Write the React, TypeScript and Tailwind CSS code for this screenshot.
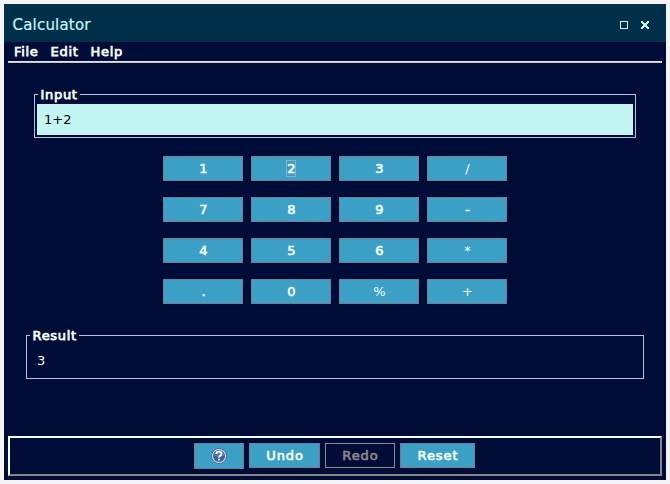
import type { ReactNode } from "react";

const keys = [
  ["1", "2", "3", "/"],
  ["7", "8", "9", "-"],
  ["4", "5", "6", "*"],
  [".", "0", "%", "+"],
];

const light = ["/", "*", "%", "+"];

function Group({ title, className, children }: { title: string; className: string; children: ReactNode }) {
  return (
    <fieldset className={`h-[52px] border border-[#b0c4de] ${className}`}>
      <legend className="ml-[3px] h-[17px] pl-[2.5px] pr-0.5 leading-[17px] tracking-[0.7px] text-[#f5fffa] [-webkit-text-stroke:0.75px_#f5fffa]">{title}</legend>
      {children}
    </fieldset>
  );
}

function Key({ label }: { label: string }) {
  return (
    <button
      className={`flex h-[25px] w-20 items-center justify-center border border-[#708090] bg-[#3b9fc6] text-[#f5fffa] ${
        light.includes(label) ? "" : "[-webkit-text-stroke:0.6px_#f5fffa]"
      }`}
    >
      <span
        className={
          label === "2"
            ? "flex h-[17px] w-[10px] items-center justify-center pl-px outline-1 -outline-offset-1 outline-[#8cafc5]"
            : "pl-px"
        }
      >
        {label}
      </span>
    </button>
  );
}

function HelpIcon() {
  return (
    <svg width="16" height="16" viewBox="0 0 16 16" fill="none">
      <circle cx="8" cy="8" r="7.5" fill="#d9e4f2" stroke="#476a9c" />
      <circle cx="8" cy="8" r="6" fill="#3c609b" />
      <path d="M2.5 8a5.5 5.5 0 0 1 11 0Q8 9 2.5 8Z" fill="#5579ae" />
      <path d="M5.4 6C5.4 2.9 10.6 3 10.5 5.9C10.4 7.5 8 7.5 8 9.6" stroke="#fff" strokeWidth="1.8" />
      <path d="M7.1 10.8h1.8v1.8H7.1z" fill="#fff" />
    </svg>
  );
}

export default function App() {
  return (
    <div className="h-[484px] w-[670px] bg-[#f4f4f4] p-1 font-['DejaVu_Sans',sans-serif] text-[13px] leading-4">
      <div className="flex h-[476px] w-[662px] flex-col bg-[#000c38]">
        <header className="flex h-[38px] shrink-0 items-center justify-between bg-[#003049] pl-[8.5px] pr-4 text-[#c5f7f4]">
          <h1 className="mt-1 text-[15px] leading-5 tracking-[0.2px] [-webkit-text-stroke:0.2px_#c5f7f4]">Calculator</h1>
          <div className="mt-1 flex items-center gap-3">
            <svg width="8" height="8" viewBox="0 0 8 8" shapeRendering="crispEdges">
              <path d="M.5.5h7v7h-7z" fill="none" stroke="currentColor" />
            </svg>
            <svg width="10" height="8" viewBox="0 0 10 8" shapeRendering="crispEdges" fill="currentColor">
              <path d="M1 0h2v1h1v1h2V1h1V0h2v2H8v1H7v2h1v1h1v2H7V7H6V6H4v1H3v1H1V6h1V5h1V3H2V2H1z" />
            </svg>
          </div>
        </header>
        <nav className="mx-1 flex h-5 shrink-0 items-start gap-3 border-b border-[#e6e6e6] pl-1.5 pt-[1.5px] tracking-[0.7px] text-[#f5fffa] [-webkit-text-stroke:0.75px_#f5fffa]">
          <span>File</span>
          <span>Edit</span>
          <span>Help</span>
        </nav>
        <div className="mx-1 h-px shrink-0 bg-[#c4c4c4]" />
        <main className="flex flex-1 flex-col">
          <Group title="Input" className="mx-[30px] mt-[23px]">
            <div className="mx-0.5 mt-px flex h-[31px] items-center bg-[#c3f5f3] pl-[7px] text-black">1+2</div>
          </Group>
          <div className="ml-[159px] mt-[18px] grid w-fit grid-cols-4 gap-x-2 gap-y-4">
            {keys.flat().map((key) => (
              <Key key={key} label={key} />
            ))}
          </div>
          <Group title="Result" className="mx-[22px] mt-[23px]">
            <div className="mt-px flex h-[31px] items-center pl-2.5 text-[#f5fffa]">3</div>
          </Group>
        </main>
        <footer className="mx-1 mb-1 h-10 shrink-0 border-2 border-b-[#858585] border-l-[#f5fffa] border-r-[#858585] border-t-[#f5fffa]">
          <div className="flex items-start gap-[5px] pl-[184px] pt-[5px] tracking-[0.9px] text-[#f5fffa] [-webkit-text-stroke:0.7px_#f5fffa]">
            <button className="flex h-[26px] w-[50px] items-center justify-center border border-[#708090] bg-[#3b9fc6]">
              <HelpIcon />
            </button>
            <button className="h-[25px] w-[71px] border border-[#708090] bg-[#3b9fc6] pl-px">Undo</button>
            <button className="h-[25px] w-[70px] border border-[#888888] pl-px text-[#888888] [-webkit-text-stroke:0.7px_#888888]">Redo</button>
            <button className="h-[25px] w-[75px] border border-[#708090] bg-[#3b9fc6] pl-px">Reset</button>
          </div>
        </footer>
      </div>
    </div>
  );
}
